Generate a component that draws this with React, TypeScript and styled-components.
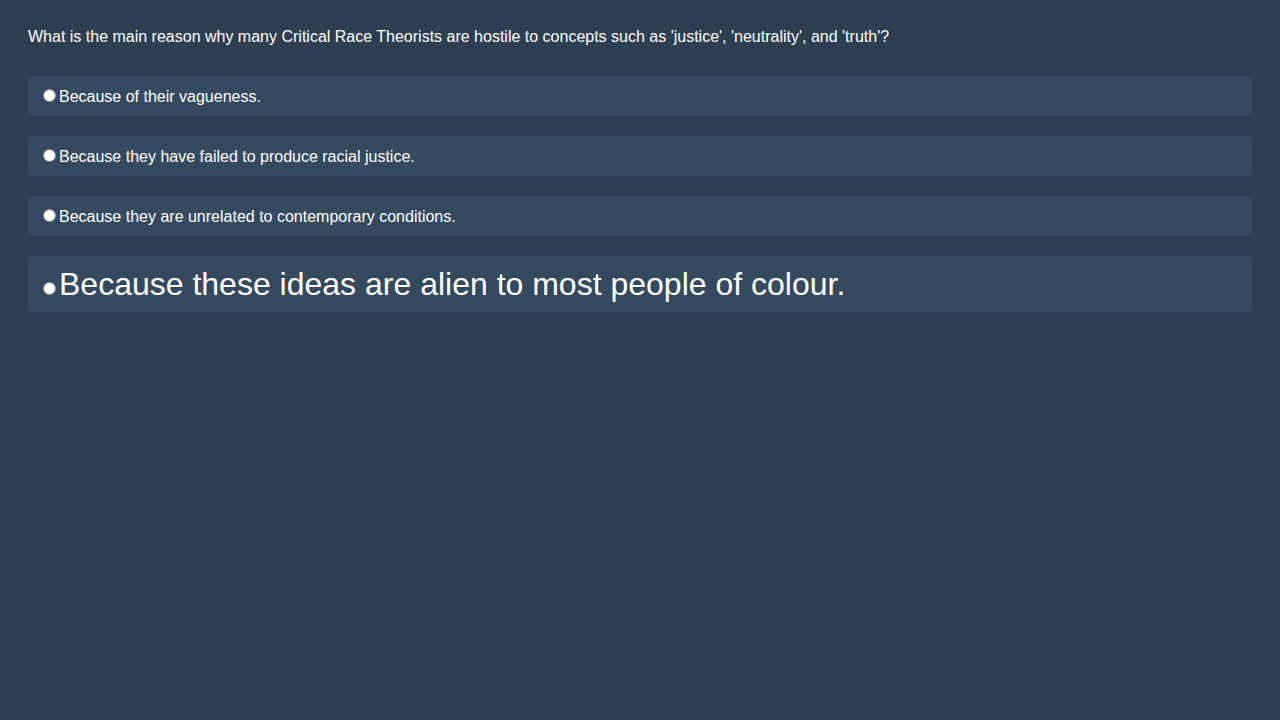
import styled, { createGlobalStyle } from 'styled-components'

const GlobalStyle = createGlobalStyle`
  html, body {
    margin: 0;
    background: #2c3e50;
  }
  body {
    padding: 28px;
    font-family: "Liberation Sans", Arial, sans-serif;
    color: #ffffff;
  }
`

const Question = styled.p`
  margin: 0 0 30px 0;
  font-size: 16px;
  line-height: 18px;
`

const OptionList = styled.div`
  display: flex;
  flex-direction: column;
  gap: 20px;
`

const Option = styled.label<{ $big?: boolean }>`
  display: block;
  box-sizing: border-box;
  height: ${p => (p.$big ? '56px' : '40px')};
  background: #34495e;
  border-radius: 4px;
  padding: 10px;
  font-size: ${p => (p.$big ? '32px' : '16px')};
  line-height: ${p => (p.$big ? '36px' : '20px')};
  overflow: hidden;
  cursor: pointer;
`

const options = [
  'Because of their vagueness.',
  'Because they have failed to produce racial justice.',
  'Because they are unrelated to contemporary conditions.',
  'Because these ideas are alien to most people of colour.',
]

export default function App() {
  return (
    <>
      <GlobalStyle />
      <Question>
        What is the main reason why many Critical Race Theorists are hostile to concepts such as 'justice', 'neutrality', and 'truth'?
      </Question>
      <OptionList>
        {options.map((text, i) => (
          <Option key={i} $big={i === 3}>
            <input type="radio" name="answer" />
            {text}
          </Option>
        ))}
      </OptionList>
    </>
  )
}
